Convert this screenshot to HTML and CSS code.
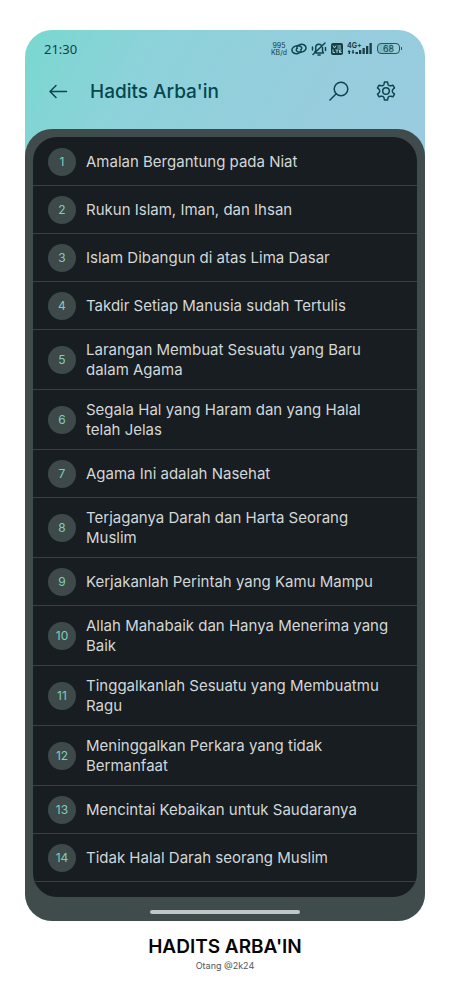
FILE: index.html
```html
<!DOCTYPE html>
<html lang="id">
<head>
<meta charset="utf-8">
<meta name="viewport" content="width=device-width, initial-scale=1">
<title>Hadits Arba'in</title>
<link rel="stylesheet" href="styles.css">
</head>
<body>
<main class="phone">
  <div class="status">
    <time class="clock">21:30</time>
    <div class="indicators">
      <span class="speed"><span>995</span><span>KB/d</span></span>
      <svg viewBox="0 0 16 14" width="16" height="14"><g class="line"><path d="M10.500 9.200C8.500 11.500 5 12.300 2.800 11C.4 9.600.3 6.800 2.500 5.200C4.700 3.500 8.500 3.200 10.300 5C11.200 6 10.700 7.400 9.500 8"/><path d="M5.500 4.800C7.500 2.500 11 1.700 13.200 3C15.600 4.400 15.700 7.200 13.500 8.800C11.300 10.500 7.500 10.800 5.700 9C4.800 8 5.300 6.600 6.500 6"/></g></svg>
      <svg viewBox="0 0 16 14" width="16" height="14"><g class="line"><path d="M5 11H12.500L11.500 9V5.500M10 3C9.500 2.400 8.800 2.200 8 2.200C6 2.200 4.700 3.600 4.700 5.500V8.500L3.700 10.300M7 13H9.200M14 1L2 12.500M1.500 5V8M14.500 5.500V8.500"/></g></svg>
      <svg viewBox="0 0 12 12" width="12" height="12"><rect class="solid" width="12" height="12" rx="2"/><path class="cut" d="M2 2.500L3.500 5L5 2.500M6.500 3H10M6.500 5H10M2 6.500V9.500H4M4.500 7H7.500M6 7V10M10.500 7H8.500V9.500H10.500M8.500 8.300H10"/></svg>
      <svg viewBox="0 0 26 13" width="26" height="13"><text class="net" x="0" y="6">4G+</text><path class="solid" d="M2 8L4 10H3V12H1.500V10H.5ZM6 12L4.500 10H5.300V8H6.700V10H7.500ZM8.500 10H11V12H8.500ZM12 8H14.300V12H12ZM15.500 6H17.800V12H15.500ZM19 4H21.300V12H19ZM22.500 1H24.800V12H22.500Z"/></svg>
      <span class="battery">68</span>
    </div>
  </div>
  <header class="bar">
    <button class="icon-button" aria-label="Kembali"><svg viewBox="0 0 20 20" width="20" height="20"><path class="line" d="M18.500 10.500H2M8 4.500L2 10.500L8 16.500"/></svg></button>
    <h1 class="title">Hadits Arba'in</h1>
    <button class="icon-button" aria-label="Cari"><svg viewBox="0 0 20 20" width="20" height="20"><g class="line"><circle cx="12" cy="8" r="6.800"/><path d="M7.200 12.800L1 19"/></g></svg></button>
    <button class="icon-button settings" aria-label="Pengaturan"><svg viewBox="0 0 20 20" width="20" height="20"><g class="line"><path d="M8.500 1H11.500L12 3.200Q12.300 4.100 13.200 4.600Q14 5 14.900 4.800L16.900 4.200L18.500 6.900L17 8.300Q16.300 9 16.300 10T17 11.700L18.500 13.100L16.900 15.800L14.900 15.200Q14 15 13.200 15.400Q12.300 15.900 12 16.800L11.500 19H8.500L8 16.800Q7.700 15.900 6.800 15.400Q6 15 5.100 15.200L3.100 15.800L1.500 13.100L3 11.700Q3.700 11 3.700 10T3 8.300L1.500 6.900L3.100 4.200L5.100 4.800Q6 5 6.800 4.600Q7.700 4.100 8 3.200Z"/><circle cx="10" cy="10" r="3.300"/></g></svg></button>
  </header>
  <section class="frame">
    <ol class="list">
      <li class="row"><span class="num">1</span><span>Amalan Bergantung pada Niat</span></li>
      <li class="row"><span class="num">2</span><span>Rukun Islam, Iman, dan Ihsan</span></li>
      <li class="row"><span class="num">3</span><span>Islam Dibangun di atas Lima Dasar</span></li>
      <li class="row"><span class="num">4</span><span>Takdir Setiap Manusia sudah Tertulis</span></li>
      <li class="row"><span class="num">5</span><span>Larangan Membuat Sesuatu yang Baru<br>dalam Agama</span></li>
      <li class="row"><span class="num">6</span><span>Segala Hal yang Haram dan yang Halal<br>telah Jelas</span></li>
      <li class="row"><span class="num">7</span><span>Agama Ini adalah Nasehat</span></li>
      <li class="row"><span class="num">8</span><span>Terjaganya Darah dan Harta Seorang<br>Muslim</span></li>
      <li class="row"><span class="num">9</span><span>Kerjakanlah Perintah yang Kamu Mampu</span></li>
      <li class="row"><span class="num">10</span><span>Allah Mahabaik dan Hanya Menerima yang<br>Baik</span></li>
      <li class="row"><span class="num">11</span><span>Tinggalkanlah Sesuatu yang Membuatmu<br>Ragu</span></li>
      <li class="row"><span class="num">12</span><span>Meninggalkan Perkara yang tidak<br>Bermanfaat</span></li>
      <li class="row"><span class="num">13</span><span>Mencintai Kebaikan untuk Saudaranya</span></li>
      <li class="row"><span class="num">14</span><span>Tidak Halal Darah seorang Muslim</span></li>
    </ol>
    <div class="home"></div>
  </section>
</main>
<footer class="caption">
  <h2 class="caption-title">HADITS ARBA'IN</h2>
  <p class="credit">Otang @2k24</p>
</footer>
</body>
</html>
```
FILE: styles.css
```css
* { box-sizing: border-box; }
body {
  margin: 0;
  padding: 30px 25px 0;
  background: #fff;
  font-family: Inter, "Noto Sans", sans-serif;
  color: #173e45;
}
.phone {
  overflow: hidden;
  border-radius: 27px;
  background: linear-gradient(120deg, #79d8cf 0, #8dd2da 120px, #96cddd 280px, #9acbe0 450px);
}
.line {
  fill: none;
  stroke: #104550;
  stroke-width: 1.5;
  stroke-linecap: round;
  stroke-linejoin: round;
}
.solid { fill: #173e45; }
.cut { fill: none; stroke: #a0d2dc; stroke-width: 1; }
.status {
  display: flex;
  justify-content: space-between;
  align-items: center;
  height: 37px;
  padding: 0 25px 0 19px;
}
.clock { font-family: "Noto Sans", sans-serif; font-size: 13px; }
.indicators { display: flex; align-items: center; gap: 4px; }
.speed {
  display: flex;
  flex-direction: column;
  align-items: center;
  font-size: 7px;
  line-height: 7px;
}
.net { font: 700 7px Inter, sans-serif; fill: #173e45; }
.battery {
  position: relative;
  width: 23px;
  height: 11px;
  border: 1px solid #2d535b;
  border-radius: 4px;
  background: linear-gradient(90deg, #7dbcc6 68%, #96cfda 68%);
  font-size: 9px;
  line-height: 9px;
  text-align: center;
}
.battery::after {
  content: "";
  position: absolute;
  right: -3px;
  top: 3px;
  width: 1px;
  height: 3px;
  background: #2d535b;
}
.bar {
  display: flex;
  align-items: center;
  height: 62px;
  padding: 0 24px 14px 18px;
}
.icon-button {
  display: flex;
  align-items: center;
  justify-content: center;
  width: 30px;
  height: 40px;
  padding: 0;
  border: 0;
  background: none;
}
.settings { margin-left: 17px; }
.title {
  flex: 1;
  margin: 0 0 0 17px;
  font-size: 19px;
  font-weight: 500;
  color: #07474e;
}
.frame {
  padding: 8px 8px 7px;
  border-radius: 27px 27px 0 0;
  background: #404b4b;
}
.list {
  margin: 0;
  padding: 1px 0 15px;
  list-style: none;
  border-radius: 24px;
  background: #171d20;
  overflow: hidden;
}
.row {
  display: flex;
  align-items: center;
  gap: 10px;
  min-height: 48px;
  padding: 10px 15px 9px;
  border-bottom: 1px solid #374143;
  font-size: 15px;
  line-height: 20px;
  color: #d3d7d8;
}
.num {
  flex: none;
  width: 28px;
  height: 28px;
  border-radius: 50%;
  background: #3e494a;
  font-size: 12px;
  line-height: 28px;
  text-align: center;
  color: #7bd0bd;
}
.home {
  width: 150px;
  height: 4px;
  margin: 13px auto 0;
  border-radius: 2px;
  background: #bdc8c7;
}
.caption { padding-top: 14px; text-align: center; }
.caption-title {
  margin: 0;
  font-size: 19px;
  font-weight: 600;
  line-height: 24px;
  color: #050505;
}
.credit { margin: 0; font-size: 9px; line-height: 14px; color: #555; }
```
